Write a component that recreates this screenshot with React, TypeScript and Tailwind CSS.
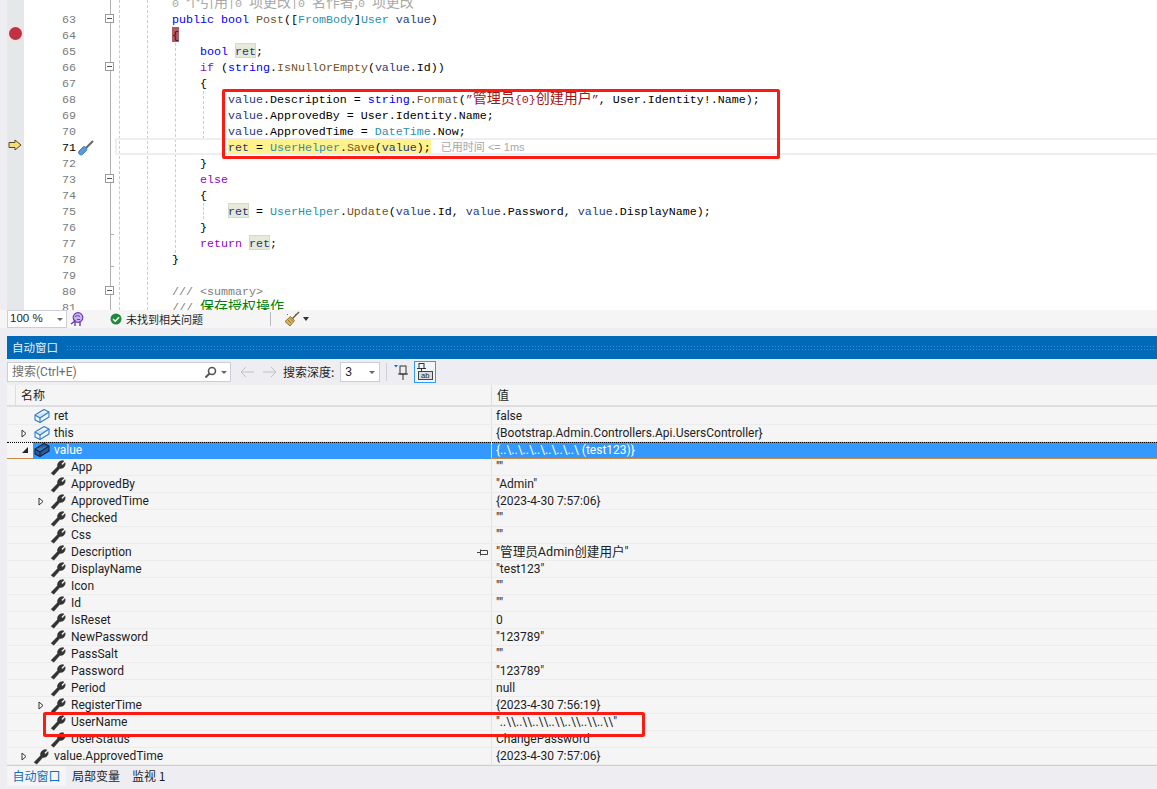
const KW = "text-[#0000ff]";
const CTRL = "text-[#8f08c4]";
const TYPE = "text-[#2b91af]";
const FN = "text-[#74531f]";
const VAR = "text-[#1f377f]";
const STR = "text-[#a31515]";
const DOC = "text-[#808080]";
const GREEN = "text-[#008000]";
const HINT = "text-[#a8a8a8]";
const BOX = "inline-block h-[15px] -mt-px pt-px leading-4";
const REF = `${BOX} bg-[#e6ead9] outline outline-1 -outline-offset-1 outline-[#d6dcc4]`;
const YEL = "bg-[#fff28c]";
const CJK = "text-[14px] leading-[8px] font-['Noto_Sans_CJK_SC']";

type Tok = [string, string?];
type Line = { n?: number; fold?: boolean; tick?: boolean; toks: Tok[] };

const lines: Line[] = [
  {
    toks: [
      ["        "],
      ["0 ", HINT],
      ["个引用", `${HINT} ${CJK}`],
      ["|0 ", HINT],
      ["项更改", `${HINT} ${CJK}`],
      ["|0 ", HINT],
      ["名作者,", `${HINT} ${CJK}`],
      ["0 ", HINT],
      ["项更改", `${HINT} ${CJK}`],
    ],
  },
  { n: 63, fold: true, toks: [["        "], ["public bool", KW], [" "], ["Post", FN], ["(["], ["FromBody", TYPE], ["]"], ["User", TYPE], [" "], ["value", VAR], [")"]] },
  { n: 64, toks: [["        "], ["{", `${BOX} bg-[#ae5a67] text-[#3a1015]`]] },
  { n: 65, toks: [["            "], ["bool", KW], [" "], ["ret", `${VAR} ${REF}`], [";"]] },
  { n: 66, fold: true, toks: [["            "], ["if", CTRL], [" ("], ["string", KW], ["."], ["IsNullOrEmpty", FN], ["("], ["value", VAR], [".Id))"]] },
  { n: 67, toks: [["            {"]] },
  {
    n: 68,
    toks: [
      ["                "],
      ["value", VAR],
      [".Description = "],
      ["string", KW],
      ["."],
      ["Format", FN],
      ["("],
      ["”", STR],
      ["管理员", `${STR} ${CJK}`],
      ["{0}", STR],
      ["创建用户", `${STR} ${CJK}`],
      ["”", STR],
      [", User.Identity!.Name);"],
    ],
  },
  { n: 69, toks: [["                "], ["value", VAR], [".ApprovedBy = User.Identity.Name;"]] },
  { n: 70, toks: [["                "], ["value", VAR], [".ApprovedTime = "], ["DateTime", TYPE], [".Now;"]] },
  {
    n: 71,
    toks: [
      ["                "],
      ["ret", `${VAR} ${BOX} ${YEL}`],
      [" = ", `${BOX} ${YEL}`],
      ["UserHelper", `${TYPE} ${BOX} ${YEL}`],
      [".", `${BOX} ${YEL}`],
      ["Save", `${FN} ${BOX} ${YEL}`],
      ["(", `${BOX} ${YEL}`],
      ["value", `${VAR} ${BOX} ${YEL}`],
      [");", `${BOX} ${YEL}`],
      [" "],
      ["已用时间 <= 1ms", "ml-[3px] text-[#a8a8a8] text-[11px] leading-[8px] font-['Liberation_Sans','Noto_Sans_CJK_SC']"],
    ],
  },
  { n: 72, toks: [["            }"]] },
  { n: 73, fold: true, toks: [["            "], ["else", CTRL]] },
  { n: 74, toks: [["            {"]] },
  { n: 75, toks: [["                "], ["ret", `${VAR} ${REF}`], [" = "], ["UserHelper", TYPE], ["."], ["Update", FN], ["("], ["value", VAR], [".Id, "], ["value", VAR], [".Password, "], ["value", VAR], [".DisplayName);"]] },
  { n: 76, tick: true, toks: [["            }"]] },
  { n: 77, toks: [["            "], ["return", CTRL], [" "], ["ret", `${VAR} ${REF}`], [";"]] },
  { n: 78, tick: true, toks: [["        }"]] },
  { n: 79, toks: [[""]] },
  { n: 80, fold: true, toks: [["        "], ["/// <summary>", DOC]] },
  { n: 81, toks: [["        "], ["/// ", DOC], ["保存授权操作", `${GREEN} ${CJK}`]] },
];

type Row = { name: string; value: string; level: number; icon: "cube" | "wrench"; arrow?: boolean; open?: boolean; pin?: boolean; selected?: boolean };

const rows: Row[] = [
  { name: "ret", value: "false", level: 0, icon: "cube" },
  { name: "this", value: "{Bootstrap.Admin.Controllers.Api.UsersController}", level: 0, icon: "cube", arrow: true },
  { name: "value", value: "{..\\..\\..\\..\\..\\..\\..\\ (test123)}", level: 0, icon: "cube", open: true, selected: true },
  { name: "App", value: '""', level: 1, icon: "wrench" },
  { name: "ApprovedBy", value: '"Admin"', level: 1, icon: "wrench" },
  { name: "ApprovedTime", value: "{2023-4-30 7:57:06}", level: 1, icon: "wrench", arrow: true },
  { name: "Checked", value: '""', level: 1, icon: "wrench" },
  { name: "Css", value: '""', level: 1, icon: "wrench" },
  { name: "Description", value: '"管理员Admin创建用户"', level: 1, icon: "wrench", pin: true },
  { name: "DisplayName", value: '"test123"', level: 1, icon: "wrench" },
  { name: "Icon", value: '""', level: 1, icon: "wrench" },
  { name: "Id", value: '""', level: 1, icon: "wrench" },
  { name: "IsReset", value: "0", level: 1, icon: "wrench" },
  { name: "NewPassword", value: '"123789"', level: 1, icon: "wrench" },
  { name: "PassSalt", value: '""', level: 1, icon: "wrench" },
  { name: "Password", value: '"123789"', level: 1, icon: "wrench" },
  { name: "Period", value: "null", level: 1, icon: "wrench" },
  { name: "RegisterTime", value: "{2023-4-30 7:56:19}", level: 1, icon: "wrench", arrow: true },
  { name: "UserName", value: '"..\\\\..\\\\..\\\\..\\\\..\\\\..\\\\..\\\\"', level: 1, icon: "wrench" },
  { name: "UserStatus", value: "ChangePassword", level: 1, icon: "wrench" },
  { name: "value.ApprovedTime", value: "{2023-4-30 7:57:06}", level: 0, icon: "wrench", arrow: true },
];

const WrenchIcon = () => (
  <svg width="17" height="17" viewBox="0 0 16 16" className="-ml-px shrink-0">
    <path d="M1 13.500 7 7.200C6.600 4.200 8.800 1.500 12 1.500l1.200.4-2.500 2.600.9 1.300 2.600-2.400c.8 3.200-1.800 6.200-5 5.500l-5.600 6.300z" fill="#333" stroke="#333" strokeWidth=".4" />
  </svg>
);

const CubeIcon = ({ dark }: { dark?: boolean }) => {
  const line = dark ? "#14233a" : "#2f7cc4";
  return (
    <svg width="16" height="16" viewBox="0 0 16 16" className="shrink-0" fill="none" strokeLinejoin="round">
      <path d="M1 7 10 1.500 15 4v5L6 14.500 1 12z" fill={dark ? "#2a5c9a" : "#eef5fc"} stroke={line} strokeWidth="1.100" />
      <path d="M1 7l5 3 9-6" fill={dark ? "#3c78bd" : "#cfe2f5"} stroke={line} strokeWidth="1.100" />
      <path d="M6 10v4.500" stroke={line} strokeWidth="1.100" />
    </svg>
  );
};

const Arrow = ({ open }: { open?: boolean }) =>
  open ? (
    <svg width="8" height="8" viewBox="0 0 8 8" className="-ml-[2px]">
      <path d="M7 1v6H1z" fill="#262626" />
    </svg>
  ) : (
    <svg width="8" height="9" viewBox="0 0 8 9" className="-ml-[3px]">
      <path d="M2 1l4 3.500L2 8z" fill="#fff" stroke="#333" strokeWidth="1" />
    </svg>
  );

const Screwdriver = () => (
  <svg width="18" height="18" viewBox="0 0 18 18" className="shrink-0">
    <path d="M9 9 16 2" stroke="#666" strokeWidth="2" />
    <path d="M2 12 6 8c1-.8 2.200-.4 3 .5s1.200 2 .5 3l-4 4c-1.200.8-2.500.4-3.300-.5S1.200 13 2 12z" fill="#5b9bd5" stroke="#2f6fb0" strokeWidth=".8" />
  </svg>
);

const CodeRow = ({ line }: { line: Line }) => (
  <div className="flex h-4 items-start">
    <div className={`w-[76px] shrink-0 pt-px text-right leading-4 ${line.n === 71 ? "text-black" : "text-[#7a7a7a]"}`}>{line.n}</div>
    <div className="w-[24px] shrink-0" />
    <div className="relative h-4 w-[16px] shrink-0">
      {line.fold && (
        <div className="absolute left-[5px] top-[3px] flex h-[9px] w-[9px] items-center justify-center border border-[#9a9a9a] bg-white">
          <div className="h-px w-[5px] bg-[#555]" />
        </div>
      )}
      {line.tick && <div className="absolute bottom-0 left-[10px] h-px w-[4px] bg-[#b0b0b0]" />}
    </div>
    <pre className="pt-px font-['Liberation_Mono'] text-[11.67px] leading-4 text-black">
      {line.toks.map((t, i) => (
        <span key={i} className={t[1]}>
          {t[0]}
        </span>
      ))}
    </pre>
  </div>
);

const Editor = () => (
  <div className="relative h-[310px] shrink-0 overflow-hidden bg-white font-['Liberation_Mono'] text-[11.67px]">
    <div className="absolute inset-y-0 left-0 w-[7px] bg-[#eeeef2]" />
    <div className="absolute inset-y-0 left-[7px] w-[17px] bg-[#e6e7e8]" />
    {/* outline line and indent guides */}
    <div className="absolute inset-y-0 left-[110px] w-px bg-[#b0b0b0]" />
    <div className="absolute inset-y-0 left-[119px] border-l border-dashed border-[#cccccc]" />
    <div className="absolute inset-y-0 left-[147px] border-l border-dashed border-[#cccccc]" />
    <div className="absolute left-[175px] top-[43px] h-[220px] border-l border-dashed border-[#cccccc]" />
    <div className="absolute left-[203px] top-[91px] h-[48px] border-l border-dashed border-[#cccccc]" />
    <div className="absolute left-[203px] top-[203px] h-[16px] border-l border-dashed border-[#cccccc]" />
    {/* current line */}
    <div className="absolute left-[115px] right-0 top-[138px] h-[17px] border-2 border-r-0 border-[#eeeef2]" />

    <div className="relative -mt-[5px]">
      {lines.map((l, i) => (
        <CodeRow key={i} line={l} />
      ))}
    </div>

    <div className="absolute left-[9px] top-[27px] h-[13px] w-[13px] rounded-full bg-[#c1313f]" />
    <svg width="14" height="12" viewBox="0 0 14 12" className="absolute left-[8px] top-[139px]">
      <path d="M1 3.500h6V1l6 5-6 5V8.500H1z" fill="#f7dc7c" stroke="#5a4a1e" strokeWidth="1" />
    </svg>
    <div className="absolute left-[77px] top-[139px]">
      <Screwdriver />
    </div>
    <div className="absolute left-[222px] top-[89px] h-[70px] w-[558px] rounded-[2px] border-[3px] border-[#fb1b12]" />
  </div>
);

const StatusBar = () => (
  <div className="flex h-[18px] shrink-0 items-center bg-[#f5f5f5] pl-[7px] font-['Noto_Sans_CJK_SC'] text-[11px] text-[#1e1e1e]">
    <div className="flex h-[18px] w-[60px] items-center justify-between border border-[#ccced8] bg-white pl-[2px] pr-[3px] font-['Liberation_Sans'] text-[11.500px]">
      100 %
      <div className="h-0 w-0 border-x-[3px] border-t-[3px] border-x-transparent border-t-[#666]" />
    </div>
    <svg width="14" height="15" viewBox="0 0 14 15" className="ml-[3px]" fill="none">
      <circle cx="8" cy="5.500" r="4.800" fill="#c9b4ee" stroke="#6a3cb8" strokeWidth="1.200" />
      <path d="M5 4.500c1.500-1 4-1 5 0M7 7.500h3" stroke="#6a3cb8" />
      <path d="M1 12l4-3v5M10 9v5" stroke="#6a3cb8" strokeWidth="1.400" />
    </svg>
    <svg width="12" height="12" viewBox="0 0 12 12" className="ml-[26px]">
      <circle cx="6" cy="6" r="5.500" fill="#1f8a3b" />
      <path d="M3 6l2.200 2.200L9 4.200" stroke="#fff" strokeWidth="1.500" fill="none" />
    </svg>
    <span className="ml-[4px]">未找到相关问题</span>
    <div className="ml-[67px] h-[14px] w-px bg-[#b8b8c0]" />
    <svg width="16" height="16" viewBox="0 0 16 16" className="ml-[13px]" fill="none">
      <path d="M15 1 8 8" stroke="#6a5a3a" strokeWidth="1.500" />
      <path d="M6.500 5.500 10.500 9.500 6 15 1 10.500z" fill="#d9b45a" stroke="#7a5a20" strokeWidth=".8" />
      <path d="M4 9l3 3M6 7.500l3 3" stroke="#7a5a20" strokeWidth=".7" />
      <path d="M11 3l1 1M3 3l1 1" stroke="#3c78bd" />
    </svg>
    <div className="ml-[3px] h-0 w-0 border-x-[3px] border-t-[4px] border-x-transparent border-t-[#333]" />
  </div>
);

const TitleBar = () => (
  <div className="mt-2 flex h-[23px] shrink-0 items-center bg-[#0069b8] pl-[5px] pr-[3px] font-['Noto_Sans_CJK_SC'] text-[11.500px] text-white">
    <span className="opacity-90">自动窗口</span>
    <div className="ml-[8px] h-[5px] flex-1 bg-[radial-gradient(#3f8fd0_1px,transparent_1px)] bg-[length:3px_3px]" />
  </div>
);

const Toolbar = () => (
  <div className="flex h-[26px] shrink-0 items-center bg-[#eeeef2] font-['Noto_Sans_CJK_SC'] text-[12px] leading-4 text-[#1e1e1e]">
    <div className="flex h-[20px] w-[224px] items-center justify-between border border-[#ccced8] bg-white pl-[4px] pr-[3px]">
      <span className="-mt-px font-['Roboto','Noto_Sans_CJK_SC'] text-[#6d6d6d]">搜索(Ctrl+E)</span>
      <div className="flex items-center gap-[4px]">
        <svg width="13" height="13" viewBox="0 0 13 13" fill="none">
          <circle cx="8" cy="5" r="3.500" stroke="#555" strokeWidth="1.600" />
          <path d="M5.500 7.500 1.500 11.500" stroke="#555" strokeWidth="2" />
        </svg>
        <div className="h-0 w-0 border-x-[3px] border-t-[3px] border-x-transparent border-t-[#666]" />
      </div>
    </div>
    <svg width="14" height="12" viewBox="0 0 14 12" className="ml-[9px]" fill="none">
      <path d="M14 6H1M6 1 1 6l5 5" stroke="#c0c0c8" />
    </svg>
    <svg width="14" height="12" viewBox="0 0 14 12" className="ml-[9px]" fill="none">
      <path d="M0 6h13M8 1l5 5-5 5" stroke="#c0c0c8" />
    </svg>
    <span className="-mt-px ml-[6px]">搜索深度:</span>
    <div className="ml-[6px] flex h-[20px] w-[40px] items-center justify-between border border-[#ccced8] bg-white pl-[4px] pr-[4px] font-['Liberation_Sans']">
      3
      <div className="h-0 w-0 border-x-[3px] border-t-[3px] border-x-transparent border-t-[#666]" />
    </div>
    <div className="ml-[6px] h-[18px] w-px bg-[#ccced8]" />
    <svg width="14" height="18" viewBox="0 0 14 18" className="ml-[7px]" fill="none">
      <path d="M0 2h4L2 4.500z" fill="#0e70c0" />
      <rect x="6" y="3" width="6" height="8" stroke="#333" />
      <path d="M4 11h10M9 11v6" stroke="#333" />
    </svg>
    <div className="ml-[6px] flex h-[22px] w-[22px] items-center justify-center border border-[#3399ff] bg-[#f0f6fc]">
      <svg width="18" height="18" viewBox="0 0 18 18" fill="none">
        <rect x="3" y="0.500" width="5" height="5" stroke="#333" />
        <path d="M1 5.500h9M5.500 5.500v3" stroke="#333" />
        <rect x="2.500" y="8.500" width="14" height="8" fill="#ddd" stroke="#444" />
        <text x="5" y="15" fontSize="7.500" fontFamily="Liberation Sans" fill="#222">ab</text>
      </svg>
    </div>
  </div>
);

const WatchRow = ({ row }: { row: Row }) => (
  <div className={`relative flex h-[17px] border-b ${row.selected ? "border-b-[#c58a4a] text-white" : "border-b-[#ececec] text-[#1e1e1e]"}`}>
    {row.selected && <div className="absolute inset-x-0 top-0 border-t border-dotted border-black" />}
    <div className={`flex w-[484px] shrink-0 items-center ${row.level === 0 ? "pl-[16px]" : "pl-[33px]"}`}>
      <div className="flex w-[10px] shrink-0 justify-start">{(row.arrow || row.open) && <Arrow open={row.open} />}</div>
      <div className={`flex h-[17px] flex-1 items-center ${row.selected ? "bg-[#3399ff]" : ""}`}>
        <div className="ml-px">{row.icon === "cube" ? <CubeIcon dark={row.selected} /> : <WrenchIcon />}</div>
        <span className="ml-[4px]">{row.name}</span>
      </div>
    </div>
    <div className={`flex flex-1 items-center border-l border-l-[#e2e2e6] pl-[4px] ${row.pin ? "text-[12.600px]" : ""} ${row.selected ? "bg-[#3399ff]" : ""}`}>
      {row.value}
    </div>
    {row.pin && (
      <svg width="12" height="7" viewBox="0 0 12 7" className="absolute left-[470px] top-[5px]" fill="none">
        <path d="M0 3.500h3M3.500 .5v6M3.500 1.500h7v4h-7" stroke="#444" />
      </svg>
    )}
  </div>
);

const Watch = () => (
  <div className="flex-1 bg-[#f5f5f5] font-['Roboto','Noto_Sans_CJK_SC'] text-[12px]">
    <div className="flex h-[22px] items-center border-b-2 border-b-[#dedee2] bg-[#f5f5f5] text-[#1e1e1e]">
      <div className="flex h-full w-[484px] shrink-0 items-center pl-[8px]">
        <div className="flex h-full items-center border-l border-l-[#dedee2] pl-[5px] font-['Noto_Sans_CJK_SC']">名称</div>
      </div>
      <div className="flex h-full items-center border-l border-l-[#dedee2] pl-[5px] font-['Noto_Sans_CJK_SC']">值</div>
    </div>
    <div className="pt-px">
      {rows.map((r) => (
        <WatchRow key={r.name} row={r} />
      ))}
    </div>
  </div>
);

const Tabs = () => (
  <div className="flex h-[25px] shrink-0 items-start border-t border-t-[#ccced8] bg-[#eeeef2] font-['Noto_Sans_CJK_SC'] text-[12px] text-[#1e1e1e]">
    <div className="flex h-[20px] w-[59px] items-center justify-center bg-[#f5f5f5] text-[#0e70c0]">自动窗口</div>
    <div className="flex h-[20px] items-center pl-[6px]">局部变量</div>
    <div className="flex h-[20px] items-center pl-[12px]">监视 1</div>
  </div>
);

export default function App() {
  return (
    <div className="flex h-[789px] w-full flex-col overflow-hidden bg-[#eeeef2]">
      <Editor />
      <StatusBar />
      <div className="relative flex flex-1 flex-col overflow-hidden pl-[7px]">
        <TitleBar />
        <Toolbar />
        <Watch />
        <Tabs />
        <div className="absolute left-[43px] top-[384px] h-[25px] w-[602px] rounded-[2px] border-[3px] border-[#fb1b12]" />
      </div>
    </div>
  );
}
